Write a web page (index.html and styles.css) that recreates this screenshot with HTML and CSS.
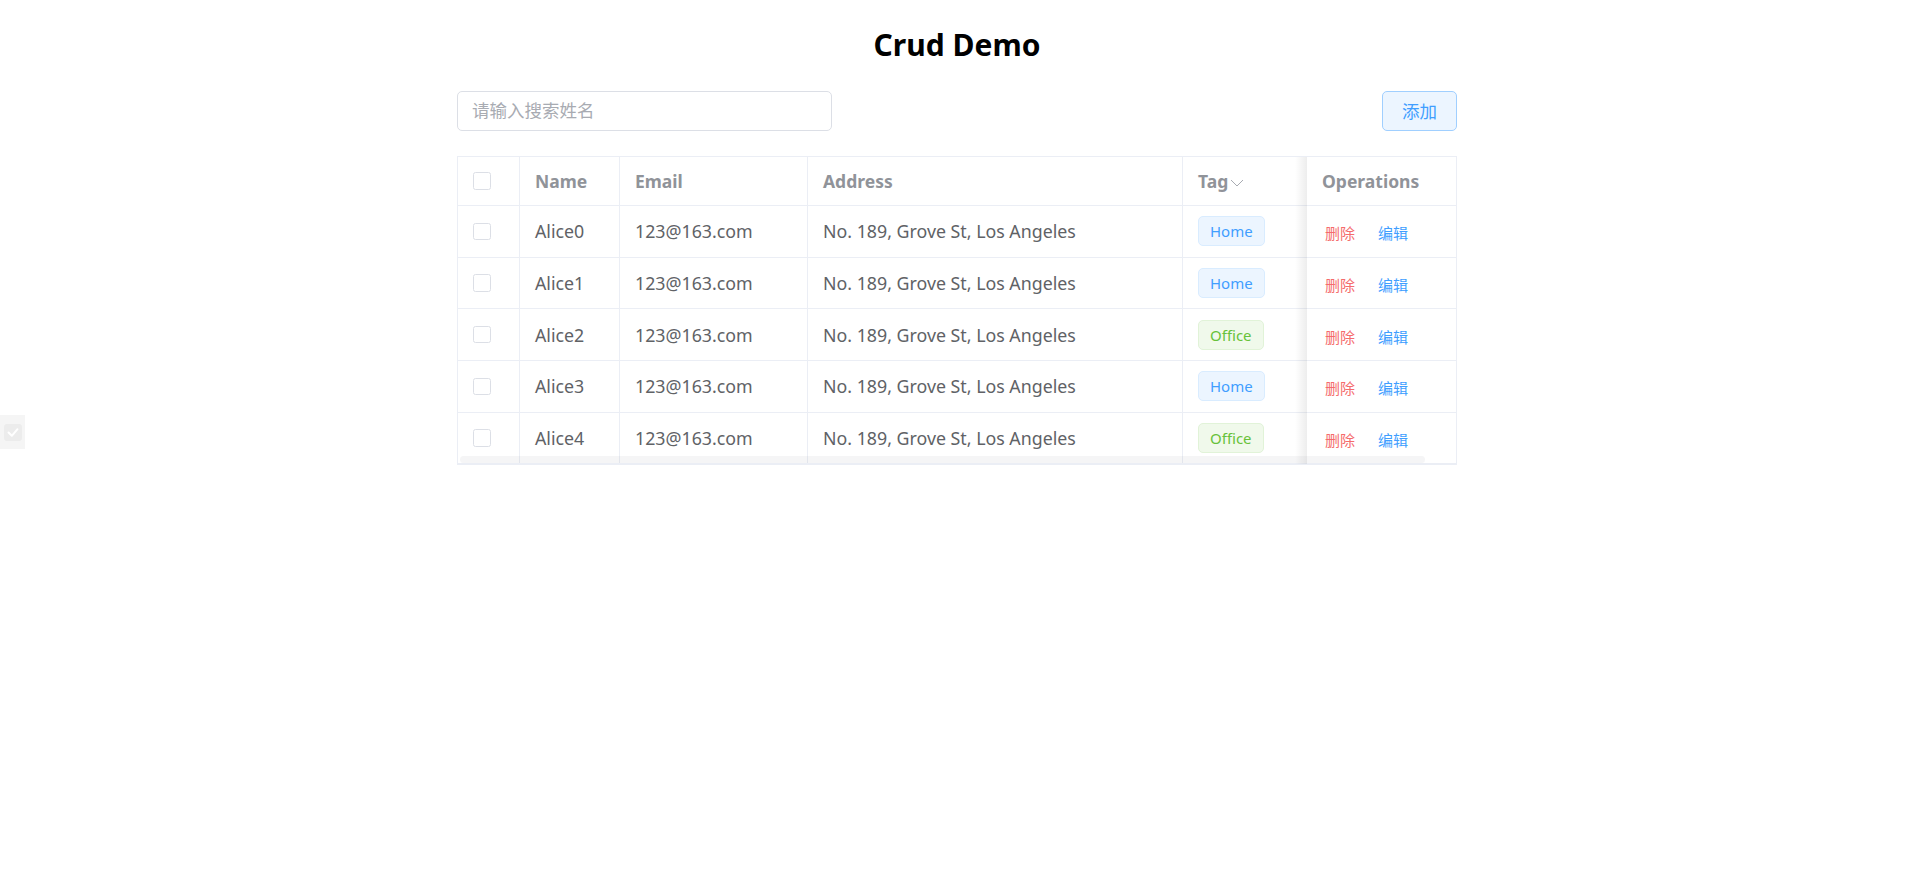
FILE: index.html
```html
<!DOCTYPE html>
<html lang="zh-CN">
<head>
<meta charset="utf-8">
<title>Crud Demo</title>
<link rel="stylesheet" href="styles.css">
</head>
<body>
<div class="side-widget">
  <svg width="18" height="17" viewBox="0 0 18 17"><rect x="0" y="0" width="18" height="17" rx="3" fill="#ececec"/><path d="M4.5 8.5 L7.8 11.8 L13.5 5.2" fill="none" stroke="#ffffff" stroke-width="2" stroke-linecap="round" stroke-linejoin="round"/></svg>
</div>
<div class="page">
  <h2 class="title">Crud Demo</h2>
  <div class="toolbar">
    <input class="search" type="text" placeholder="请输入搜索姓名">
    <button class="btn-add" type="button">添加</button>
  </div>
  <div class="table-wrap">
    <table class="grid">
      <colgroup>
        <col class="c-sel"><col class="c-name"><col class="c-email"><col class="c-addr"><col class="c-tag"><col class="c-ops">
      </colgroup>
      <thead>
        <tr>
          <th><span class="checkbox"></span></th>
          <th>Name</th>
          <th>Email</th>
          <th>Address</th>
          <th class="tag-col"><span class="th-tag">Tag<svg class="chev" width="14" height="8" viewBox="0 0 14 8"><path d="M1 1 L7 7 L13 1" fill="none" stroke="#a8abb2" stroke-width="1"/></svg></span></th>
          <th class="fixed">Operations</th>
        </tr>
      </thead>
      <tbody>
        <tr>
          <td><span class="checkbox"></span></td>
          <td>Alice0</td>
          <td>123@163.com</td>
          <td>No. 189, Grove St, Los Angeles</td>
          <td class="tag-col"><span class="tag tag-home">Home</span></td>
          <td class="fixed"><button class="link danger" type="button">删除</button><button class="link primary" type="button">编辑</button></td>
        </tr>
        <tr>
          <td><span class="checkbox"></span></td>
          <td>Alice1</td>
          <td>123@163.com</td>
          <td>No. 189, Grove St, Los Angeles</td>
          <td class="tag-col"><span class="tag tag-home">Home</span></td>
          <td class="fixed"><button class="link danger" type="button">删除</button><button class="link primary" type="button">编辑</button></td>
        </tr>
        <tr>
          <td><span class="checkbox"></span></td>
          <td>Alice2</td>
          <td>123@163.com</td>
          <td>No. 189, Grove St, Los Angeles</td>
          <td class="tag-col"><span class="tag tag-office">Office</span></td>
          <td class="fixed"><button class="link danger" type="button">删除</button><button class="link primary" type="button">编辑</button></td>
        </tr>
        <tr>
          <td><span class="checkbox"></span></td>
          <td>Alice3</td>
          <td>123@163.com</td>
          <td>No. 189, Grove St, Los Angeles</td>
          <td class="tag-col"><span class="tag tag-home">Home</span></td>
          <td class="fixed"><button class="link danger" type="button">删除</button><button class="link primary" type="button">编辑</button></td>
        </tr>
        <tr>
          <td><span class="checkbox"></span></td>
          <td>Alice4</td>
          <td>123@163.com</td>
          <td>No. 189, Grove St, Los Angeles</td>
          <td class="tag-col"><span class="tag tag-office">Office</span></td>
          <td class="fixed"><button class="link danger" type="button">删除</button><button class="link primary" type="button">编辑</button></td>
        </tr>
      </tbody>
    </table>
    <div class="hscroll"></div>
  </div>
</div>
</body>
</html>
```
FILE: styles.css
```css
* { box-sizing: border-box; }
html, body { margin: 0; background: #ffffff; }
body {
  padding: 0 0 0 6px;
  font-family: "Noto Sans", "Noto Sans CJK SC", sans-serif;
  color: #606266;
}
.side-widget {
  position: fixed;
  left: 0;
  top: 415px;
  width: 25px;
  height: 34px;
  background: #f5f5f5;
  display: flex;
  align-items: center;
  justify-content: center;
}
.page {
  width: 1000px;
  margin: 0 auto;
  padding-top: 25px;
}
.title {
  margin: 0 0 26px;
  font-size: 30px;
  line-height: 40px;
  font-weight: 700;
  color: #000000;
  text-align: center;
}
.toolbar {
  display: flex;
  justify-content: space-between;
  align-items: center;
  height: 40px;
}
.search {
  width: 375px;
  height: 40px;
  border: 1px solid #dcdfe6;
  border-radius: 5px;
  padding: 0 14px 3px;
  font-family: "Noto Sans CJK SC", sans-serif;
  font-size: 17.5px;
  color: #606266;
  outline: none;
  background: #fff;
}
.search::placeholder { color: #a8abb2; }
.btn-add {
  width: 75px;
  height: 40px;
  border: 1px solid #a0cfff;
  border-radius: 5px;
  background: #ecf5ff;
  color: #409eff;
  font-family: "Noto Sans CJK SC", sans-serif;
  font-size: 17.5px;
  padding: 0 0 2px;
}
.table-wrap {
  position: relative;
  margin-top: 25px;
  width: 1000px;
  border-top: 1px solid #ebeef5;
  border-left: 1px solid #ebeef5;
  border-bottom: 1px solid #ebeef5;
}
.grid {
  width: 999px;
  table-layout: fixed;
  border-collapse: separate;
  border-spacing: 0;
}
.c-sel { width: 62px; }
.c-name { width: 100px; }
.c-email { width: 188px; }
.c-addr { width: 375px; }
.c-tag { width: 124px; }
.c-ops { width: 150px; }
.grid th, .grid td {
  padding: 0 15px;
  text-align: left;
  vertical-align: middle;
  border-right: 1px solid #ebeef5;
  border-bottom: 1px solid #ebeef5;
  white-space: nowrap;
  font-size: 17.5px;
}
.grid th {
  height: 49px;
  color: #909399;
  font-weight: 700;
}
.grid td {
  height: 51.7px;
  color: #606266;
  font-size: 17.8px;
}
.grid .tag-col { border-right: none; }
.grid .fixed { position: relative; background: #fff; }
.grid .fixed::before {
  content: "";
  position: absolute;
  top: 0;
  bottom: -1px;
  left: -12px;
  width: 12px;
  background: linear-gradient(to right, rgba(0,0,0,0), rgba(0,0,0,0.07));
}
.checkbox {
  display: block;
  width: 17.5px;
  height: 17.5px;
  border: 1px solid #dcdfe6;
  border-radius: 2.5px;
  background: #fff;
}
.th-tag {
  display: inline-flex;
  align-items: center;
}
.chev { margin-left: 2px; margin-top: 4px; }
.tag {
  display: inline-flex;
  align-items: center;
  height: 30px;
  padding: 0 11px;
  border: 1px solid;
  border-radius: 5px;
  font-size: 15px;
}
.tag-home { background: #ecf5ff; border-color: #d9ecff; color: #409eff; }
.tag-office { background: #f0f9eb; border-color: #e1f3d8; color: #67c23a; }
.link {
  border: none;
  background: none;
  padding: 4px 3px 0;
  font-family: "Noto Sans CJK SC", sans-serif;
  font-size: 15px;
  cursor: pointer;
}
.link + .link { margin-left: 17px; }
.danger { color: #f56c6c; }
.primary { color: #409eff; }
.hscroll {
  position: absolute;
  left: 2px;
  bottom: 1px;
  width: 965px;
  height: 7px;
  border-radius: 4px;
  background: rgba(144,147,153,0.09);
}
```
